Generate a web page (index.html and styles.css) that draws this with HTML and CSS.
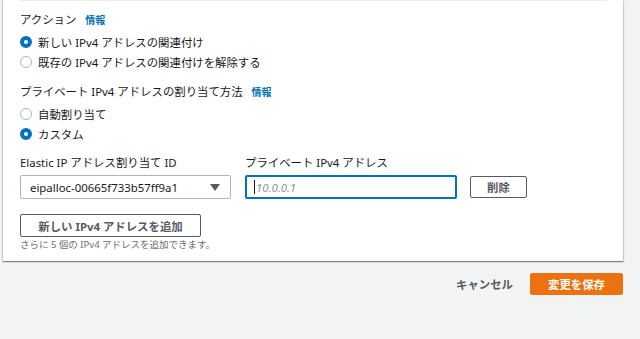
FILE: index.html
```html
<!DOCTYPE html>
<html lang="ja">
<head>
  <meta charset="utf-8">
  <title>IP アドレスの管理</title>
  <link rel="stylesheet" href="styles.css">
</head>
<body>
  <div class="card">
    <div class="divider"></div>

    <div class="field">
      <div class="label">アクション <a class="info">情報</a></div>
      <label class="radio"><span class="dot on"></span>新しい IPv4 アドレスの関連付け</label>
      <label class="radio"><span class="dot"></span>既存の IPv4 アドレスの関連付けを解除する</label>
    </div>

    <div class="field">
      <div class="label">プライベート IPv4 アドレスの割り当て方法 <a class="info">情報</a></div>
      <label class="radio"><span class="dot"></span>自動割り当て</label>
      <label class="radio"><span class="dot on"></span>カスタム</label>
    </div>

    <div class="row">
      <div class="col">
        <div class="label">Elastic IP アドレス割り当て ID</div>
        <div class="select">
          <span>eipalloc-00665f733b57ff9a1</span>
          <svg width="10" height="7" viewBox="0 0 10 7"><path d="M0 0h10L5 7z" fill="#545b64"/></svg>
        </div>
      </div>
      <div class="col">
        <div class="label">プライベート IPv4 アドレス</div>
        <div class="input"><span class="caret"></span><span class="ph">10.0.0.1</span></div>
      </div>
      <button class="btn small">削除</button>
    </div>

    <button class="btn add">新しい IPv4 アドレスを追加</button>
    <p class="hint">さらに 5 個の IPv4 アドレスを追加できます。</p>
  </div>

  <div class="footer">
    <a class="cancel">キャンセル</a>
    <button class="primary">変更を保存</button>
  </div>
</body>
</html>
```

FILE: styles.css
```css
body {
  margin: 0;
  background: #f2f3f3;
  color: #16191f;
  font-family: "Noto Sans", "Noto Sans CJK JP", sans-serif;
  font-size: 11.4px;
}
.card {
  margin-left: 3px;
  width: 620px;
  background: #fff;
  box-shadow: 0 1px 1px 0 rgba(0, 28, 36, .3), 1px 1px 1px 0 rgba(0, 28, 36, .15), -1px 1px 1px 0 rgba(0, 28, 36, .15);
  padding: 0 0 8px 17px;
  box-sizing: border-box;
}
.divider {
  height: 1px;
  background: #eaeded;
  margin-right: 16px;
}
.field {
  padding-top: 11px;
  margin-bottom: 1px;
}
.label {
  line-height: 16px;
  margin-bottom: 4px;
}
.info {
  color: #0073bb;
  font-weight: bold;
  font-size: 10px;
  margin-left: 6px;
}
.radio {
  display: flex;
  align-items: center;
  height: 20px;
}
.dot {
  width: 12px;
  height: 12px;
  border: 1px solid #aab7b8;
  border-radius: 50%;
  box-sizing: border-box;
  margin: 0 6px 0 0;
}
.dot.on {
  border: 4px solid #0073bb;
}
.row {
  display: flex;
  align-items: flex-end;
  padding-top: 10px;
}
.col {
  margin-right: 14px;
}
.col + .col {
  margin-right: 13px;
}
.col .label {
  margin-bottom: 4px;
}
.select, .input {
  width: 211px;
  height: 24px;
  box-sizing: border-box;
  border: 1px solid #aab7b8;
  border-radius: 2px;
  display: flex;
  align-items: center;
  padding: 0 10px 0 9px;
}
.select {
  justify-content: space-between;
}
.input {
  border: 2px solid #0073bb;
  width: 212px;
  padding-left: 7px;
}
.caret {
  width: 1px;
  height: 14px;
  background: #16191f;
}
.ph {
  color: #879596;
  font-style: italic;
  margin-left: 1px;
}
.btn {
  font-family: inherit;
  background: #fff;
  border: 1px solid #545b64;
  border-radius: 2px;
  color: #545b64;
  font-weight: bold;
  font-size: 11.4px;
  height: 23px;
  padding: 0;
}
.small {
  width: 57px;
  height: 22px;
  margin-bottom: 1px;
}
.add {
  display: block;
  width: 181px;
  margin-top: 15px;
}
.hint {
  margin: 0;
  font-size: 9.5px;
  line-height: 16px;
  color: #687078;
}
.footer {
  display: flex;
  justify-content: flex-end;
  align-items: center;
  gap: 17px;
  width: 623px;
  margin-top: 12px;
}
.cancel {
  color: #545b64;
  font-weight: bold;
}
.primary {
  font-family: inherit;
  background: #ec7211;
  border: 1px solid #ec7211;
  border-radius: 2px;
  color: #fff;
  font-weight: bold;
  font-size: 11.4px;
  width: 93px;
  height: 22px;
}
```
